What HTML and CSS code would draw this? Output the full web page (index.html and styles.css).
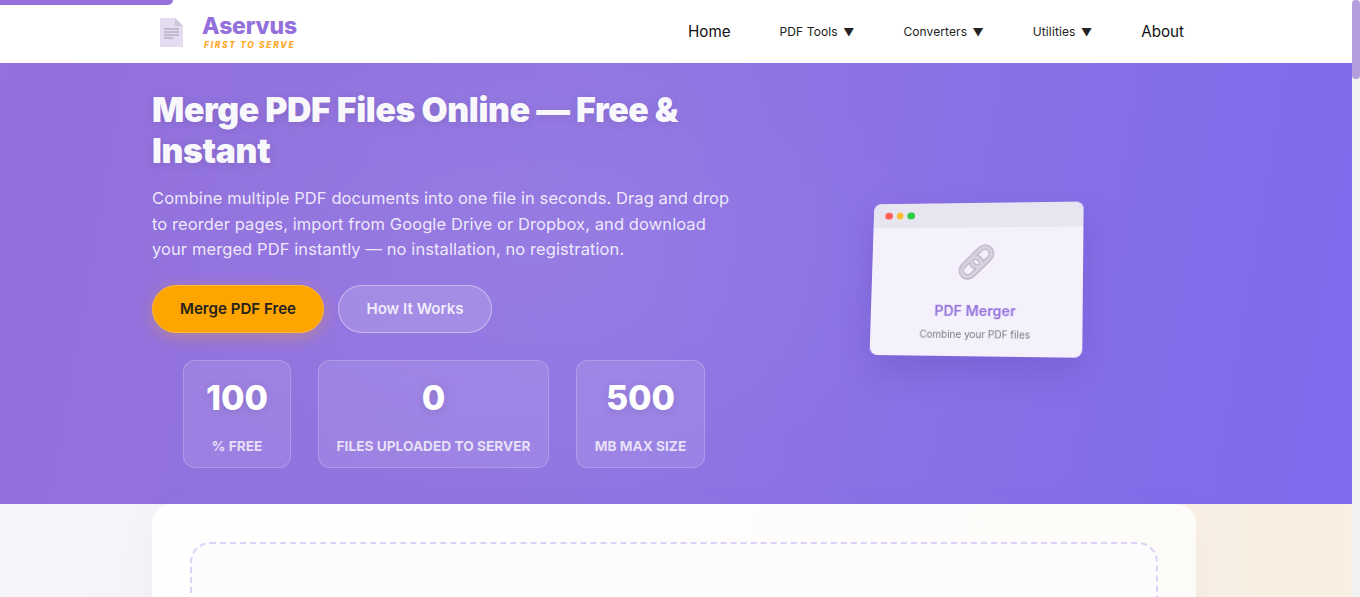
FILE: index.html
```html
<!DOCTYPE html>
<html lang="en">
<head>
<meta charset="utf-8">
<title>Merge PDF Files Online — Aservus</title>
<link rel="stylesheet" href="styles.css">
</head>
<body>
<div class="progress"></div>
<div class="scrollbar"><div class="scrollbar-thumb"></div></div>
<header class="site-header">
  <a class="logo" href="#">
    <svg class="logo-icon" width="23" height="29" viewBox="0 0 23 29" aria-hidden="true">
      <path d="M0 0H15L23 8V29H0Z" fill="#e6dcf1"/>
      <path d="M15 0L23 8H15Z" fill="#cdc6d6"/>
      <path d="M4 11H19M4 14H19M4 17H19" stroke="#9f98a8" stroke-width="1"/>
      <path d="M4 20H13" stroke="#9f98a8" stroke-width="1"/>
    </svg>
    <span class="logo-text">
      <span class="logo-name">Aservus</span>
      <span class="logo-tag">FIRST TO SERVE</span>
    </span>
  </a>
  <nav class="nav">
    <a class="nav-main" href="#">Home</a>
    <a class="nav-sub" href="#">PDF Tools <span class="caret">▼</span></a>
    <a class="nav-sub" href="#">Converters <span class="caret">▼</span></a>
    <a class="nav-sub" href="#">Utilities <span class="caret">▼</span></a>
    <a class="nav-main" href="#">About</a>
  </nav>
</header>
<section class="hero">
  <div class="hero-grid">
    <div class="hero-copy">
      <h1>Merge PDF Files Online — Free &amp; Instant</h1>
      <p class="lead">Combine multiple PDF documents into one file in seconds. Drag and drop to reorder pages, import from Google Drive or Dropbox, and download your merged PDF instantly — no installation, no registration.</p>
      <div class="actions">
        <a class="btn btn-primary" href="#">Merge PDF Free</a>
        <a class="btn btn-ghost" href="#">How It Works</a>
      </div>
      <div class="stats">
        <div class="stat stat-a"><strong>100</strong><span>% FREE</span></div>
        <div class="stat stat-b"><strong>0</strong><span>FILES UPLOADED TO SERVER</span></div>
        <div class="stat stat-c"><strong>500</strong><span>MB MAX SIZE</span></div>
      </div>
    </div>
    <div class="hero-visual">
      <div class="window">
        <div class="window-bar"><i class="dot red"></i><i class="dot amber"></i><i class="dot green"></i></div>
        <div class="window-body">
          <svg class="link-icon" width="40" height="40" viewBox="0 0 40 40" aria-hidden="true">
            <g fill="none" transform="rotate(-45 20 20)">
              <rect x="1.5" y="13.5" width="23" height="13" rx="6.5" stroke="#b0a5bb" stroke-width="5.5"/>
              <rect x="15.5" y="13.5" width="23" height="13" rx="6.5" stroke="#b0a5bb" stroke-width="5.5"/>
              <rect x="1.5" y="13.5" width="23" height="13" rx="6.5" stroke="#d9d1de" stroke-width="3.5"/>
              <rect x="15.5" y="13.5" width="23" height="13" rx="6.5" stroke="#d9d1de" stroke-width="3.5"/>
            </g>
          </svg>
          <div class="window-title">PDF Merger</div>
          <div class="window-sub">Combine your PDF files</div>
        </div>
      </div>
    </div>
  </div>
</section>
<main class="content">
  <div class="panel">
    <div class="dropzone"></div>
  </div>
</main>
</body>
</html>
```
FILE: styles.css
```css
* { box-sizing: border-box; }
html { background: #f8f0e4; }
body {
  margin: 0 8px 0 0;
  font-family: Inter, "Noto Sans", sans-serif;
  color: #222;
  background: linear-gradient(90deg, #f6f5fb 0%, #f9efe2 100%);
}
a { text-decoration: none; color: inherit; }

.progress {
  position: absolute;
  top: 0;
  left: 0;
  width: 173px;
  height: 5px;
  background: #9370db;
  border-radius: 0 0 8px 0;
  z-index: 2;
}
.scrollbar {
  position: fixed;
  top: 0;
  right: 0;
  bottom: 0;
  width: 8px;
  background: #f1f1f1;
  z-index: 2;
}
.scrollbar-thumb {
  height: 79px;
  background: #b39ddb;
  border-radius: 4px;
}

.site-header {
  height: 63px;
  background: #fff;
  display: flex;
  align-items: center;
  justify-content: space-between;
  padding: 0 168px 0 160px;
}
.logo { display: flex; align-items: center; gap: 19px; padding-top: 1px; }
.logo-text { display: flex; flex-direction: column; }
.logo-name {
  font-size: 23px;
  line-height: 26px;
  font-weight: 800;
  color: #9370db;
  letter-spacing: -0.2px;
}
.logo-tag {
  margin: 1px 0 0 2px;
  font-size: 8.5px;
  line-height: 11px;
  font-weight: 800;
  font-style: italic;
  color: #ffa726;
  letter-spacing: 1.65px;
}
.nav { display: flex; align-items: center; gap: 49px; }
.nav-main { font-size: 15.2px; font-weight: 400; color: #111; }
.nav-sub { font-size: 12px; font-weight: 400; color: #222; letter-spacing: 0.1px; }
.caret { font-size: 11px; margin-left: 2px; color: #222; }

.hero {
  height: 441px;
  padding: 27px 156px 0 152px;
  background:
    radial-gradient(ellipse 420px 260px at 530px 190px, rgba(255,255,255,.05), rgba(255,255,255,0)),
    linear-gradient(100deg, #9370db 0%, #9175e2 45%, #7e6aec 100%);
  color: #fff;
}
.hero-grid {
  display: grid;
  grid-template-columns: 584px 440px;
  column-gap: 20px;
}
h1 {
  margin: 0 0 15px;
  font-size: 33.75px;
  line-height: 40.5px;
  font-weight: 900;
  color: #f8f8fc;
  letter-spacing: -0.35px;
  text-shadow: 0 2px 10px rgba(0,0,0,.1);
}
.lead {
  margin: 0 0 22px;
  font-size: 16.5px;
  line-height: 25.6px;
  color: rgba(255,255,255,.85);
  letter-spacing: 0.09px;
}
.actions { display: flex; gap: 14px; margin-bottom: 27px; }
.btn {
  height: 48px;
  display: flex;
  align-items: center;
  justify-content: center;
  border-radius: 24px;
  font-size: 15.1px;
  font-weight: 600;
}
.btn-primary {
  width: 172px;
  background: #ffa500;
  color: #25221c;
  border: 1px solid #ffb733;
  box-shadow: 0 4px 15px rgba(255,165,0,.3);
}
.btn-ghost {
  width: 154px;
  background: rgba(255,255,255,.15);
  border: 1px solid rgba(255,255,255,.4);
  color: rgba(255,255,255,.85);
}
.stats { display: flex; justify-content: center; gap: 27px; }
.stat {
  height: 108px;
  display: flex;
  flex-direction: column;
  align-items: center;
  background: rgba(255,255,255,.1);
  border: 1px solid rgba(255,255,255,.2);
  border-radius: 12px;
  padding-top: 14px;
}
.stat-a { width: 108px; }
.stat-b { width: 231px; }
.stat-c { width: 129px; }
.stat strong {
  font-size: 34px;
  line-height: 46px;
  font-weight: 800;
  color: #fff;
  text-shadow: 0 2px 8px rgba(0,0,0,.1);
}
.stat span {
  margin-top: 16px;
  font-size: 13.7px;
  line-height: 18px;
  font-weight: 700;
  color: rgba(255,255,255,.75);
}

.hero-visual {
  display: flex;
  justify-content: center;
  padding: 112px 2px 0 0;
}
.window {
  width: 213px;
  height: 154px;
  background: #f4f1fd;
  border-radius: 8px;
  overflow: hidden;
  transform: perspective(800px) rotateY(-8deg) rotateX(5deg) skewX(-0.5deg);
  box-shadow: 0 15px 35px rgba(60,40,140,.2);
}
.window-bar {
  height: 25px;
  background: #e7e5f0;
  display: flex;
  align-items: center;
  gap: 4px;
  padding-left: 12px;
}
.dot { width: 7.5px; height: 7.5px; border-radius: 50%; }
.red { background: #ff5f57; }
.amber { background: #ffbd2e; }
.green { background: #28ca42; }
.window-body {
  display: flex;
  flex-direction: column;
  align-items: center;
  padding-top: 15px;
}
.link-icon { display: block; }
.window-title {
  margin-top: 19px;
  font-size: 14.4px;
  line-height: 20px;
  font-weight: 600;
  color: #9370db;
}
.window-sub {
  margin-top: 6px;
  font-size: 10px;
  line-height: 14px;
  color: #777;
}

.content { padding: 0 156px 0 152px; }
.panel {
  min-height: 900px;
  padding: 38px;
  border-radius: 20px 20px 0 0;
  background: linear-gradient(100deg, #fff 0%, #fdfbf8 100%);
  box-shadow: 0 10px 40px rgba(120,100,180,.05);
}
.dropzone {
  min-height: 700px;
  border: 2px dashed #dcd2f5;
  border-radius: 20px;
  background: #fcfcff;
}
```
